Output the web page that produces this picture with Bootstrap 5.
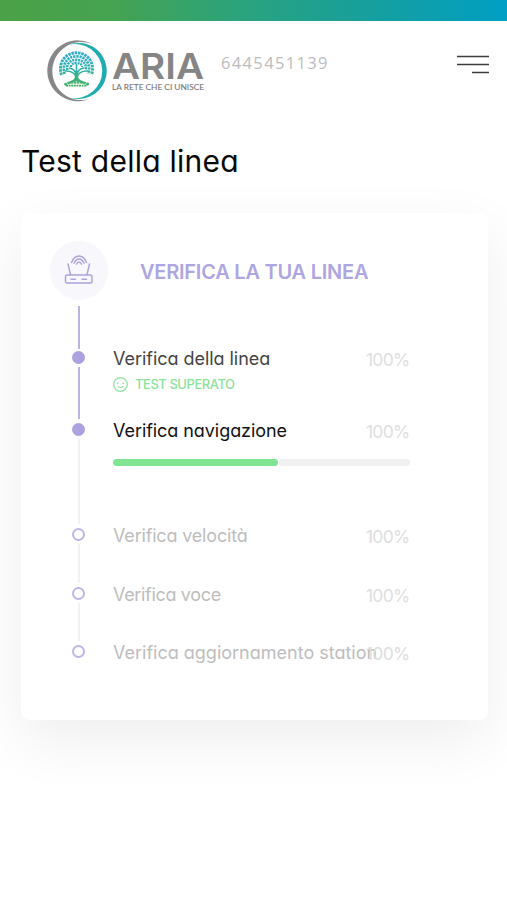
<!DOCTYPE html>
<html lang="it">
<head>
<meta charset="utf-8">
<meta name="viewport" content="width=device-width, initial-scale=1">
<title>Test della linea</title>
<link href="https://cdn.jsdelivr.net/npm/bootstrap@5.3.0/dist/css/bootstrap.min.css" rel="stylesheet">
<style>
body{font-family:Inter,"Liberation Sans",sans-serif;font-feature-settings:"cv11";background:#fff;color:#111;min-height:900px;overflow-x:hidden}
.top-strip{height:21px;background:linear-gradient(90deg,#4ba247 0%,#46a351 22%,#2ba37c 47%,#159f9f 74%,#009fc4 100%)}
.site-head{height:104px;padding:19px 18px 0 46px}
.line-number{font:400 16.5px/22px "Open Sans","Noto Sans",sans-serif;letter-spacing:1.35px;color:#bcbcbc;margin:12px 0 0 15px}
.menu-btn{margin-top:15px;line-height:0}
.page-title{font-size:30px;line-height:38px;font-weight:400;letter-spacing:.25px;color:#080808;margin:17px 0 0 21px}
.test-card{margin:33px 19px 0 21px;height:507px;border-radius:8px;padding:28px 0 0 29px;box-shadow:0 20px 60px rgba(0,0,0,.07)}
.router-disc{width:58px;height:59px;background:#f7f7fc}
.card-head{font-size:20px;font-weight:600;line-height:24px;letter-spacing:-.23px;color:#ada6e1;margin:2px 0 0 32px}
.rail{width:57px;flex:none}
.rail-line{width:2px;background:#b9b3e7}
.rail-line.pending{background:#f2f2f5}
.lead-in{margin-top:6px;height:43px}
.steps{margin-top:-2px}
.dot{width:13px;height:13px;margin:4px 0 3px;flex:none;background:#aaa3e0}
.dot.open{background:#fff;border:2px solid #bbb5ea}
.step-body{width:297px;margin-left:6px}
.step-label{font-size:18px;line-height:24px;white-space:nowrap;height:24px}
.step-name{width:253px;flex:none}
.pct{color:#dedede;font-size:17.5px;letter-spacing:-.75px;padding-top:1px}
.n1{letter-spacing:-.04px}.n2{letter-spacing:-.06px}.n3{letter-spacing:-.18px}.n4{letter-spacing:-.33px}
.s1{height:72px;color:#444}.s2{height:105px;color:#111}.s3{height:59px;color:#bdbdbd}.s4{height:58px;color:#bdbdbd}.s5{height:24px;color:#bdbdbd}
.passed{font-size:13px;line-height:16px;font-weight:500;letter-spacing:-.45px;color:#8ae39b;margin-top:5px}
.passed svg{margin-right:7px}
.bar-row{margin-top:16px;height:7px;gap:1px}
.bar-done{background:#7fe592}
.bar-left{background:#f1f1f1}
</style>
</head>
<body>
<div class="top-strip"></div>
<header class="site-head d-flex align-items-start">
  <svg width="160" height="63" viewBox="0 0 160 63" role="img" aria-label="ARIA">
    <defs>
      <linearGradient id="leaf" gradientUnits="userSpaceOnUse" x1="0" y1="11" x2="0" y2="46"><stop offset="0" stop-color="#2fa9d3"/><stop offset=".55" stop-color="#30b0a6"/><stop offset="1" stop-color="#45ae60"/></linearGradient>
    </defs>
    <path fill="#878787" d="M47 4.500A30.400 30.400 0 1 0 43 59A29 29 0 1 1 47 4.500Z"/>
    <path fill="#1fabaf" d="M22 5A28 28 0 1 1 24 57.500A27 27 0 1 0 22 5Z"/>
    <g fill="none" stroke="url(#leaf)">
      <path stroke-width="2.900" stroke-dasharray="2.500 .8" d="M15.500 35C12 24 18 13 30.500 12.800C43 13 49 24 45.500 35"/>
      <path stroke-width="2.700" stroke-dasharray="2.200 .9" d="M18.500 34C16 24 21 16.500 30.500 16.300C40 16.500 45 24 42.500 34"/>
      <path stroke-width="2.600" stroke-dasharray="2.100 .8" d="M21.500 30C20 24 24 20 30.500 19.800C37 20 41 24 39.500 30"/>
      <path stroke-width="2.300" stroke-dasharray="2 .8" d="M25 27C25 24.500 27 23 30.500 23C34 23 36 24.500 36 27"/>
      <path stroke-width="1.500" d="M30.500 24V40M23 28Q29 29 30 34M38 28Q32 29 31 34M19 31Q28 30.500 30 37M42 31Q33 30.500 31 37"/>
      <path stroke-width="3.400" d="M30.500 31V41"/>
      <path stroke-width="2" d="M30 38Q28 41.500 23.500 42.500M31 38Q33 41.500 37.500 42.500"/>
      <path stroke-width="2.600" stroke-dasharray="2.600 .6" d="M18.500 44.800Q24 41.500 30.500 42.500Q37 41.500 43 44.800"/>
      <path stroke-width="1.700" stroke-dasharray="2 .6" d="M20 45.600H41"/>
    </g>
    <text x="66" y="38.700" font-family="Inter,sans-serif" font-size="36" font-weight="600" fill="#858585" textLength="92" lengthAdjust="spacingAndGlyphs">ARIA</text>
    <text x="66" y="50" font-family="Lato,sans-serif" font-size="8.400" fill="#757575" stroke="#757575" stroke-width=".1" textLength="92" lengthAdjust="spacingAndGlyphs">LA RETE CHE CI UNISCE</text>
  </svg>
  <span class="line-number">6445451139</span>
  <button class="menu-btn btn p-0 border-0 ms-auto" aria-label="Menu">
    <svg width="32" height="20" viewBox="0 0 32 20" stroke="#3d3d3d" stroke-width="1.700"><path d="M0 1.500H32M0 9.500H32M15 17.500H32"/></svg>
  </button>
</header>
<h1 class="page-title">Test della linea</h1>
<main class="test-card bg-white">
  <div class="d-flex align-items-center">
    <div class="router-disc rounded-circle d-flex align-items-center justify-content-center flex-shrink-0">
      <svg class="mb-1" width="30" height="30" viewBox="0 0 30 30" fill="none" stroke="#aaa3e0" stroke-width="1.400" stroke-linecap="round">
        <rect x="1.500" y="21" width="26.500" height="8" rx="1.800"/>
        <path d="M6.500 20.500L4 10M23 20.500L25.500 10"/>
        <path d="M7.500 8.500Q10 2 15 2Q20 2 22.500 8.500M10 9.200Q12 5 15 5Q18 5 20 9.200M12.500 10.200Q13.500 8 15 8Q16.500 8 17.500 10.200"/>
        <path d="M7 25.200H11.500M18 25.200H22.500"/>
      </svg>
    </div>
    <h2 class="card-head mb-0">VERIFICA LA TUA LINEA</h2>
  </div>
  <div class="rail"><div class="rail-line lead-in mx-auto"></div></div>
  <div class="steps">
    <div class="d-flex s1">
      <div class="rail d-flex flex-column align-items-center"><span class="dot rounded-circle"></span><span class="rail-line flex-grow-1"></span></div>
      <div class="step-body">
        <div class="step-label d-flex"><span class="step-name n1">Verifica della linea</span><span class="pct">100%</span></div>
        <div class="passed d-flex align-items-center">
          <svg width="15" height="15" viewBox="0 0 15 15" fill="none" stroke="#8ae39b" stroke-width="1.200" stroke-linecap="round"><circle cx="7.500" cy="7.500" r="6.800"/><path d="M5.200 9.600Q7.500 11.400 9.800 9.600"/><path stroke-width="1.600" d="M4.700 6.300V6.400M10.300 6.300V6.400"/></svg>
          <span>TEST SUPERATO</span>
        </div>
      </div>
    </div>
    <div class="d-flex s2">
      <div class="rail d-flex flex-column align-items-center"><span class="dot rounded-circle"></span><span class="rail-line pending flex-grow-1"></span></div>
      <div class="step-body">
        <div class="step-label d-flex"><span class="step-name n2">Verifica navigazione</span><span class="pct">100%</span></div>
        <div class="bar-row d-flex"><div class="bar-done rounded-pill" style="width:55.6%"></div><div class="bar-left rounded-pill flex-grow-1"></div></div>
      </div>
    </div>
    <div class="d-flex s3">
      <div class="rail d-flex flex-column align-items-center"><span class="dot open rounded-circle"></span><span class="rail-line pending flex-grow-1"></span></div>
      <div class="step-body"><div class="step-label d-flex"><span class="step-name n3">Verifica velocità</span><span class="pct">100%</span></div></div>
    </div>
    <div class="d-flex s4">
      <div class="rail d-flex flex-column align-items-center"><span class="dot open rounded-circle"></span><span class="rail-line pending flex-grow-1"></span></div>
      <div class="step-body"><div class="step-label d-flex"><span class="step-name n4">Verifica voce</span><span class="pct">100%</span></div></div>
    </div>
    <div class="d-flex s5">
      <div class="rail d-flex flex-column align-items-center"><span class="dot open rounded-circle"></span></div>
      <div class="step-body"><div class="step-label d-flex"><span class="step-name n5">Verifica aggiornamento station</span><span class="pct">100%</span></div></div>
    </div>
  </div>
</main>
<script src="https://cdn.jsdelivr.net/npm/bootstrap@5.3.0/dist/js/bootstrap.bundle.min.js"></script>
</body>
</html>
